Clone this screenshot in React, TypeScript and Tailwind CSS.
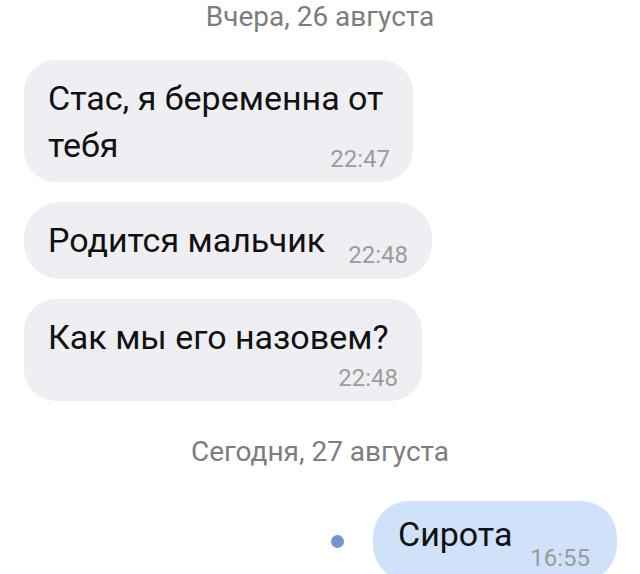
import React from 'react'

const font = { fontFamily: 'Roboto, "Noto Sans", sans-serif' }

const DateLabel: React.FC<{ text: string; className?: string }> = ({ text, className }) => (
  <div className={`text-center text-[28px] leading-[28px] text-[#7d7d7d] ${className ?? ''}`}>{text}</div>
)

const Time: React.FC<{ t: string; className?: string }> = ({ t, className }) => (
  <span className={`text-[24px] leading-[24px] text-[#9c9c9e] ${className ?? ''}`}>{t}</span>
)

const App: React.FC = () => {
  return (
    <div className="w-[640px] h-[574px] overflow-hidden bg-white font-['Roboto'] text-[#111]" style={font}>
      <DateLabel text="Вчера, 26 августа" className="pt-[3px]" />

      <div className="flex flex-col items-start gap-[20px] pl-[24px] mt-[29px]">
        <div className="w-[389px] rounded-[32px] bg-[#efeff3] pl-[24px] pr-[23px] pt-[15px] pb-[13px] text-[34px] leading-[47px]">
          <div className="whitespace-nowrap">Стас, я беременна от</div>
          <div className="flex items-end justify-between">
            <span>тебя</span>
            <Time t="22:47" className="mb-[-2px]" />
          </div>
        </div>

        <div className="w-[408px] rounded-[36px] bg-[#efeff3] pl-[24px] pr-[24px] pt-[15px] pb-[15px] flex items-end justify-between text-[34px] leading-[47px]">
          <span>Родится мальчик</span>
          <Time t="22:48" className="mb-[-3px]" />
        </div>

        <div className="w-[398px] rounded-[32px] bg-[#efeff3] pl-[24px] pr-[24px] pt-[15px] pb-[11px] text-[34px] leading-[47px]">
          <div>Как мы его назовем?</div>
          <div className="flex justify-end mt-[5px]">
            <Time t="22:48" />
          </div>
        </div>
      </div>

      <DateLabel text="Сегодня, 27 августа" className="mt-[37px]" />

      <div className="flex items-center justify-end gap-[29px] pr-[23px] mt-[35px]">
        <div className="w-[13px] h-[13px] rounded-full bg-[#6f97c9]" />
        <div className="w-[244px] h-[80px] rounded-[36px] bg-[#cfe2f9] pl-[25px] pr-[27px] pt-[10px] flex items-start justify-between text-[34px] leading-[47px]">
          <span>Сирота</span>
          <Time t="16:55" className="mt-[35px]" />
        </div>
      </div>
    </div>
  )
}

export default App
